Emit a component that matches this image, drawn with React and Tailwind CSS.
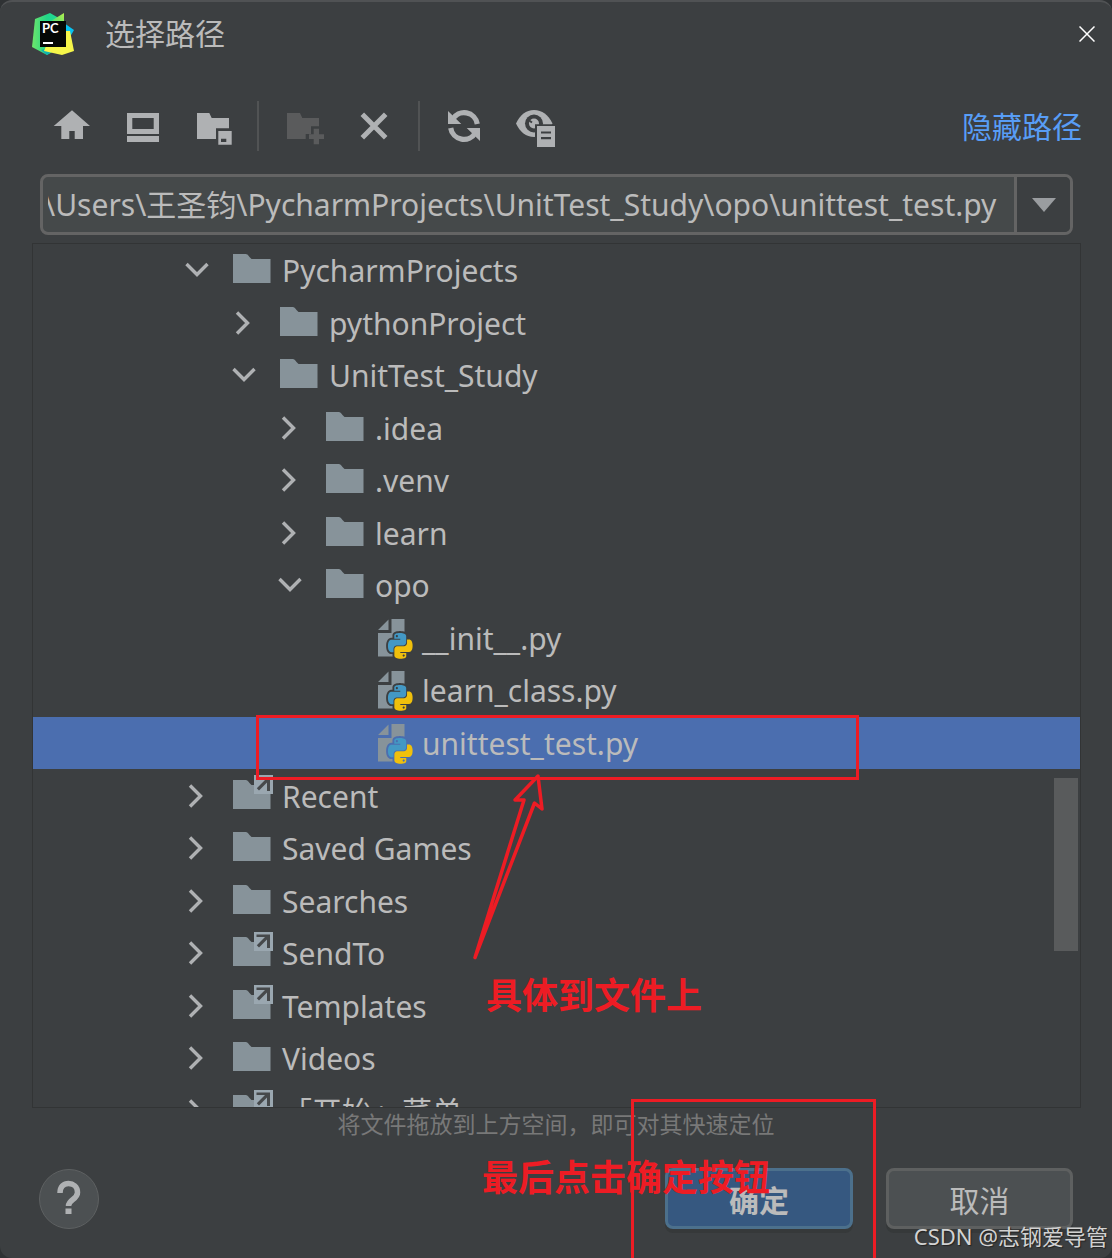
import { useState } from 'react';

const TREE = [
  { name: 'PycharmProjects', level: 0, kind: 'folder', open: true },
  { name: 'pythonProject', level: 1, kind: 'folder' },
  { name: 'UnitTest_Study', level: 1, kind: 'folder', open: true },
  { name: '.idea', level: 2, kind: 'folder' },
  { name: '.venv', level: 2, kind: 'folder' },
  { name: 'learn', level: 2, kind: 'folder' },
  { name: 'opo', level: 2, kind: 'folder', open: true },
  { name: '__init__.py', level: 3, kind: 'file' },
  { name: 'learn_class.py', level: 3, kind: 'file' },
  { name: 'unittest_test.py', level: 3, kind: 'file' },
  { name: 'Recent', level: 0, kind: 'link' },
  { name: 'Saved Games', level: 0, kind: 'folder' },
  { name: 'Searches', level: 0, kind: 'folder' },
  { name: 'SendTo', level: 0, kind: 'link' },
  { name: 'Templates', level: 0, kind: 'link' },
  { name: 'Videos', level: 0, kind: 'folder' },
  { name: '「开始」菜单', level: 0, kind: 'link' },
];

const INDENT = ['pl-[150px]', 'pl-[197px]', 'pl-[243px]', 'pl-[290px]'];

const PyCharmLogo = () => (
  <svg viewBox="0 0 42 42" className="w-[42px] h-[42px] shrink-0">
    <defs>
      <linearGradient id="pc-green" x1="0" y1="0" x2="1" y2="0">
        <stop offset="0" stopColor="#6fe56a" />
        <stop offset=".5" stopColor="#21d789" />
        <stop offset="1" stopColor="#1fdc9a" />
      </linearGradient>
      <linearGradient id="pc-lime" x1="0" y1="1" x2="1" y2="0">
        <stop offset="0" stopColor="#3edc78" />
        <stop offset="1" stopColor="#b4f04e" />
      </linearGradient>
    </defs>
    <polygon points="3,6 18,0 25,4 30,14 22,38 15,42 0,34" fill="url(#pc-green)" />
    <polygon points="9,37 15,42 18,40 16,35" fill="#10b3b0" />
    <polygon points="32,10 42,17 38,24 32,22" fill="#07c3f2" />
    <polygon points="19,8 32,0 32,12" fill="url(#pc-lime)" />
    <polygon points="33,18 38,18 42,38 30,42 12,38 14,33" fill="#f6f64a" />
    <rect x="8" y="8" width="26" height="26" fill="#050805" />
    <rect x="11" y="29" width="10" height="2" fill="#fff" />
    <text x="10" y="20" fontSize="13" fontWeight="700" fill="#fff" fontFamily="Lato, sans-serif">PC</text>
  </svg>
);

const ToolIcon = ({ children }) => (
  <svg viewBox="0 0 40 40" className="w-10 h-10 overflow-visible" fill="currentColor">{children}</svg>
);

const HomeIcon = () => (
  <ToolIcon>
    <path d="M20 4.3 38 20H31V33H22.7V25H17.3V33H9.3V20H1.7Z" />
  </ToolIcon>
);

const DesktopIcon = () => (
  <ToolIcon>
    <path fillRule="evenodd" d="M4 7H36V28H4ZM9.3 12V23H30.7V12Z" />
    <path d="M4 30H36V36H4Z" />
  </ToolIcon>
);

const ProjectIcon = () => (
  <ToolIcon>
    <path d="M3 7H15.3L17.7 12H35V22.3H22V33H3Z" />
    <path fillRule="evenodd" d="M24.3 25H37.7V38.7H24.3ZM27 32.7V36H32.3V32.7Z" />
  </ToolIcon>
);

const NewFolderIcon = () => (
  <ToolIcon>
    <path d="M3 7H16L18.3 12H35V20.3H27V28H21.7V33H3Z" />
    <path d="M29.7 22.7H35V28.3H40V33H35V38.3H29.7V33H25V28.3H29.7Z" />
  </ToolIcon>
);

const DeleteIcon = () => (
  <ToolIcon>
    <path d="M7.3 8.3 30.7 31.7M30.7 8.3 7.3 31.7" fill="none" stroke="currentColor" strokeWidth="5" />
  </ToolIcon>
);

const RefreshIcon = () => (
  <ToolIcon>
    <path d="M7.5 13.5A13.3 13.3 0 0 1 32.3 18M30.5 26.5A13.3 13.3 0 0 1 5.7 22" fill="none" stroke="currentColor" strokeWidth="5.2" />
    <path d="M3 5V18H16.3ZM35 35V22H21.7Z" />
  </ToolIcon>
);

const ShowHiddenIcon = () => (
  <ToolIcon>
    <path d="M0 17.5C4 9 10 4 18 4S32.5 9 36.5 17.5C32 26 26 31 18 31S4 26 0 17.5Z" />
    <circle cx="18" cy="17.5" r="9" className="fill-[#3c3f41]" />
    <circle cx="18" cy="17.5" r="5" />
    <path d="M11 13 16 16.5" className="stroke-[#3c3f41]" strokeWidth="2" />
    <path d="M19 18.3H42V43H19Z" className="fill-[#3c3f41]" />
    <path fillRule="evenodd" d="M21 20H39V41H21ZM25 25.5V27.5H35V25.5ZM25 31V33.3H35V31Z" />
  </ToolIcon>
);

const FolderIcon = ({ link }) => (
  <svg viewBox="0 0 40 44" className="w-10 h-11 shrink-0">
    <path d="M0 6H12.5C14.5 6 15.5 7.5 16.5 9L18.5 11H37.5V35H0Z" fill="#87939a" />
    {link && (
      <>
        <path d="M21 1H40V20H21Z" fill="#9aa7b0" />
        <path d="M23.5 3.5H37V17H34V8.5L26 16.5 23.8 14.3 32 6H23.5Z" fill="#46494b" />
      </>
    )}
  </svg>
);

const SNAKES = [
  { fill: '#4398c4', d: 'M14.25.18l.9.2.73.26.59.3.45.32.34.34.25.34.16.33.1.3.04.26.02.2-.01.13V8.5l-.05.63-.13.55-.21.46-.26.38-.3.31-.33.25-.35.19-.35.14-.33.1-.3.07-.26.04-.21.02H8.77l-.69.05-.59.14-.5.22-.41.27-.33.32-.27.35-.2.36-.15.37-.1.35-.07.32-.04.27-.02.21v3.06H3.17l-.21-.03-.28-.07-.32-.12-.35-.18-.36-.26-.36-.36-.35-.46-.32-.59-.28-.73-.21-.88-.14-1.05-.05-1.23.06-1.22.16-1.04.24-.87.32-.71.36-.57.4-.44.42-.33.42-.24.4-.16.36-.1.32-.05.24-.01h.16l.06.01h8.16v-.83H6.18l-.01-2.75-.02-.37.05-.34.11-.31.17-.28.25-.26.31-.23.38-.2.44-.18.51-.15.58-.12.64-.1.71-.06.77-.04.84-.02 1.27.05zm-6.3 1.98l-.23.33-.08.41.08.41.23.34.33.22.41.09.41-.09.33-.22.23-.34.08-.41-.08-.41-.23-.33-.33-.22-.41-.09-.41.09z' },
  { fill: '#f0c00c', d: 'M21.1 6.11l.28.06.32.12.35.18.36.27.36.35.35.47.32.59.28.73.21.88.14 1.04.05 1.23-.06 1.23-.16 1.04-.24.86-.32.71-.36.57-.4.45-.42.33-.42.24-.4.16-.36.09-.32.05-.24.02-.16-.01h-8.22v.82h5.84l.01 2.76.02.36-.05.34-.11.31-.17.29-.25.25-.31.24-.38.2-.44.17-.51.15-.58.13-.64.09-.71.07-.77.04-.84.01-1.27-.04-1.07-.14-.9-.2-.73-.25-.59-.3-.45-.33-.34-.34-.25-.34-.16-.33-.1-.3-.04-.25-.02-.2.01-.13v-5.34l.05-.64.13-.54.21-.46.26-.38.3-.32.33-.24.35-.2.35-.14.33-.1.3-.06.26-.04.21-.02.13-.01h5.84l.69-.05.59-.14.5-.21.41-.28.33-.32.27-.35.2-.36.15-.36.1-.35.07-.32.04-.28.02-.21V6.07h2.09l.14.01zm-6.47 14.25l-.23.33-.08.41.08.41.23.33.33.23.41.08.41-.08.33-.23.23-.33.08-.41-.08-.41-.23-.33-.33-.23-.41-.08-.41.08z' },
];

const PythonFileIcon = ({ selected }) => {
  const halo = selected ? 'stroke-[#4b6eaf]' : 'stroke-[#3c3f41]';
  return (
    <svg viewBox="0 0 40 44" className="w-10 h-11 shrink-0">
      <path d="M5 14 15.5 3.5V14ZM18.5 3H31.5V40.5H5V17H18.5Z" fill="#87939a" />
      <g transform="translate(15 17) scale(1.02 1.07)">
        {SNAKES.map(s => <path key={s.fill} d={s.d} className={halo} strokeWidth="3.6" strokeLinejoin="round" />)}
        {SNAKES.map(s => <path key={s.d} d={s.d} fill={s.fill} />)}
      </g>
    </svg>
  );
};

const Chevron = ({ open }) => (
  <svg viewBox="0 0 28 28" className="w-7 h-7" fill="none" stroke="#afb1b3" strokeWidth="3.4">
    <path d={open ? 'M3.5 8 14 18.5 24.5 8' : 'M7 3.5 17.5 14 7 24.5'} />
  </svg>
);

const TreeRow = ({ node, selected, onSelect }) => (
  <li
    role="treeitem"
    aria-selected={selected}
    aria-expanded={node.kind === 'file' ? undefined : !!node.open}
    onClick={onSelect}
    className={`flex items-center min-h-0 ${INDENT[node.level]} ${selected ? 'bg-[#4b6eaf]' : ''}`}
  >
    <span className="w-[50px] shrink-0">
      {node.kind !== 'file' && <Chevron open={node.open} />}
    </span>
    {node.kind === 'file' ? <PythonFileIcon selected={selected} /> : <FolderIcon link={node.kind === 'link'} />}
    <span className="ml-[9px] pt-0.5 whitespace-nowrap">{node.name}</span>
  </li>
);

const TOOLS = [
  [
    { label: '主目录', icon: HomeIcon },
    { label: '桌面', icon: DesktopIcon },
    { label: '项目目录', icon: ProjectIcon },
  ],
  [
    { label: '新建文件夹', icon: NewFolderIcon, disabled: true },
    { label: '删除', icon: DeleteIcon },
  ],
  [
    { label: '刷新', icon: RefreshIcon },
    { label: '显示隐藏文件', icon: ShowHiddenIcon },
  ],
];

const App = () => {
  const [selected, setSelected] = useState('unittest_test.py');
  const [path, setPath] = useState('\\Users\\王圣钧\\PycharmProjects\\UnitTest_Study\\opo\\unittest_test.py');

  return (
    <div className="bg-[#2f3234]">
      <div className="relative h-screen flex flex-col overflow-hidden rounded-xl border-t-2 border-[#505254] bg-[#3c3f41] text-[#bbbbbb] text-[30px] leading-10 font-['Noto_Sans','Noto_Sans_CJK_SC',sans-serif]">

        {/* Title bar */}
        <header className="flex items-center h-16 pl-8 pr-[17px]">
          <PyCharmLogo />
          <h1 className="ml-[31px] flex-1">选择路径</h1>
          <button aria-label="关闭" className="w-4 h-4 text-white">
            <svg viewBox="0 0 16 16" className="w-4 h-4" stroke="currentColor" strokeWidth="1.5">
              <path d="M.5.5 15.5 15.5M15.5.5.5 15.5" />
            </svg>
          </button>
        </header>

        {/* Toolbar */}
        <div className="flex items-center mt-8 h-14 pl-[52px] pr-[30px]">
          {TOOLS.map((group, i) => (
            <div key={i} className="flex items-center">
              {i > 0 && <span className="w-0.5 h-[50px] ml-[23px] mr-[25px] bg-[#515354]" />}
              <div className="flex gap-[31px]">
                {group.map(({ label, icon: Icon, disabled }) => (
                  <button
                    key={label}
                    aria-label={label}
                    disabled={disabled}
                    className={disabled ? 'text-[#5a5b5c]' : 'text-[#afb1b3]'}
                  >
                    <Icon />
                  </button>
                ))}
              </div>
            </div>
          ))}
          <a href="#" className="ml-auto pt-0.5 text-[#589df6]">隐藏路径</a>
        </div>

        {/* Path */}
        <div className="flex mt-5 ml-10 mr-[39px] h-[61px] shrink-0 rounded-lg border-3 border-[#646464] bg-[#45494a] overflow-hidden">
          <input
            aria-label="路径"
            value={path}
            onChange={e => setPath(e.target.value)}
            className="flex-1 min-w-0 ml-[5px] mr-1 -indent-1 outline-none"
          />
          <button aria-label="历史记录" className="w-14 flex items-center justify-center border-l-3 border-[#646464] bg-[#3c3f41]">
            <svg viewBox="0 0 24 14" className="w-6 h-3.5"><path d="M0 0H24L12 14Z" fill="#9a9da0" /></svg>
          </button>
        </div>

        {/* File tree */}
        <div className="relative flex-1 min-h-0 mt-2 ml-8 mr-[31px] border border-[#323435] overflow-hidden">
          <ul role="tree" className="grid auto-rows-fr h-[893px]">
            {TREE.map(node => (
              <TreeRow
                key={node.name}
                node={node}
                selected={node.name === selected}
                onSelect={() => setSelected(node.name)}
              />
            ))}
          </ul>
          <div className="absolute right-0.5 top-[534px] w-6 h-[173px] bg-[#595b5c]" />
        </div>

        <p className="h-9 text-center text-[23px] leading-8 text-[#787878]">将文件拖放到上方空间，即可对其快速定位</p>

        {/* Buttons */}
        <footer className="flex items-center gap-[33px] mt-6 mb-[29px] px-[39px]">
          <button aria-label="帮助" className="w-[60px] h-[60px] mr-auto rounded-full border border-[#5e6162] bg-[#4c5052]">
            <svg viewBox="0 0 58 58" className="w-full h-full">
              <path d="M20 23C20 16.5 24 13.500 28.500 13.500S37.500 16.500 37.500 22.500C37.500 29.500 28.500 29.500 28.500 36" fill="none" stroke="#afb1b3" strokeWidth="5.5" />
              <path d="M25.500 38.500H31.500V44H25.500Z" fill="#afb1b3" />
            </svg>
          </button>
          <button className="w-[188px] h-[61px] pt-1 rounded-lg border-3 border-[#4c708c] bg-[#365880] font-bold shadow-[0_4px_0_#36393a]">确定</button>
          <button className="w-[187px] h-[61px] pt-1 rounded-lg border-3 border-[#5e6060] bg-[#4c5052] shadow-[0_4px_0_#36393a]">取消</button>
        </footer>

        {/* Red markup drawn over the dialog */}
        <div className="absolute inset-0 pointer-events-none text-[#ed1c24] text-4xl font-bold">
          <div className="absolute left-[256px] top-[713px] w-[603px] h-[65px] border-3 border-[#ed1c24]" />
          <svg viewBox="0 0 80 190" className="absolute left-[470px] top-[770px] w-20 h-[190px]" fill="none" stroke="#ed1c24" strokeWidth="3.5" strokeLinejoin="round">
            <path d="M5 185.500 54 28H45L68 4 72 37 64.500 31Z" />
          </svg>
          <p className="absolute left-[486px] top-[974px] whitespace-nowrap">具体到文件上</p>
          <div className="absolute left-[631px] top-[1097px] w-[245px] h-[180px] border-3 border-[#ed1c24]" />
          <p className="absolute left-[482px] top-[1156px] whitespace-nowrap">最后点击确定按钮</p>
        </div>

        <p className="absolute right-1 bottom-1.5 text-[22px] leading-8 text-[#d2d2d2] [text-shadow:1px_1px_1px_#222]">CSDN @志钢爱导管</p>
      </div>
    </div>
  );
};

export default App;
